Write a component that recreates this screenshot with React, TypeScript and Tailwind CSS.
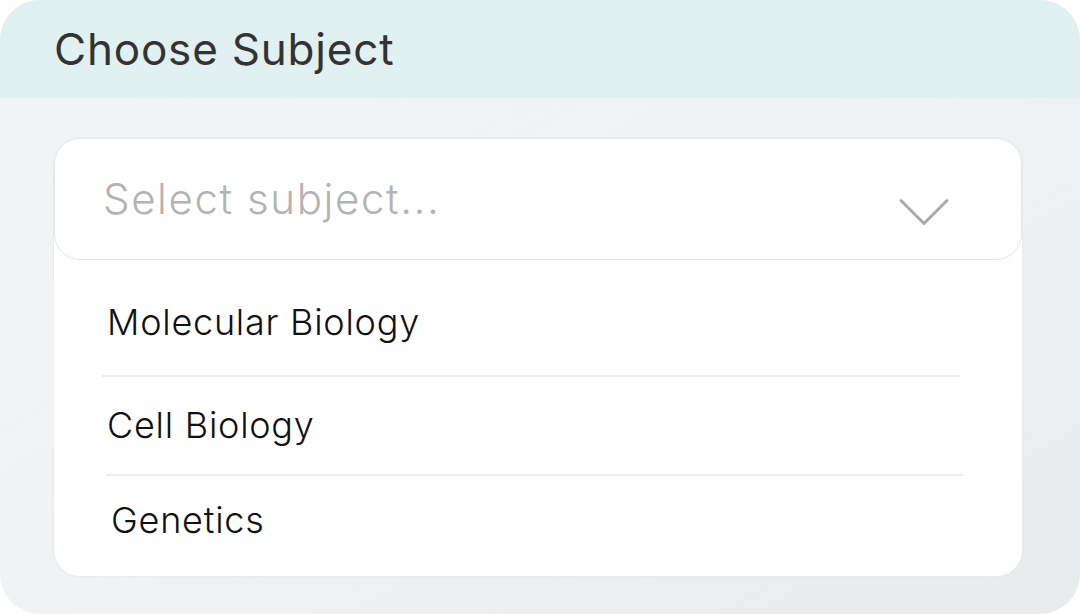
import * as React from "react";

const subjects = [
  { label: "Molecular Biology", className: "pt-[40px] pb-[31px] pl-[53px]" },
  { label: "Cell Biology", className: "pt-[26px] pb-[27px] pl-[53px]" },
  { label: "Genetics", className: "pt-[22px] pb-[34px] pl-[57px]" },
];

function Chevron() {
  return (
    <svg width="52" height="29" viewBox="0 0 52 29" fill="none" className="mt-[26px] shrink-0">
      <polyline
        points="3,2.5 26,25.5 49,2.5"
        stroke="#a9a9a9"
        strokeWidth="3"
        strokeLinecap="round"
        strokeLinejoin="round"
      />
    </svg>
  );
}

export default function App() {
  const [open] = React.useState(true);

  return (
    <div
      className="h-[614px] w-[1080px] bg-white"
      style={{ fontFamily: "Inter, 'Noto Sans', sans-serif" }}
    >
      <div className="flex h-full flex-col overflow-hidden rounded-[40px] bg-gradient-to-br from-[#f1f5f6] via-[#eff3f4] to-[#e7ebec]">
        <div className="flex h-[98px] shrink-0 items-center bg-[#e1f0f1] px-[54px]">
          <h1 className="text-[44px] leading-none font-normal tracking-[0.8px] text-[#333333]">
            Choose Subject
          </h1>
        </div>

        <div className="flex-1 pt-[40px] pr-[58px] pb-[40px] pl-[54px]">
          <div className="flex h-full flex-col rounded-[26px] bg-white shadow-[0_1px_3px_rgba(0,0,0,0.04)] ring-1 ring-[#e8ecec]">
            <button className="flex h-[122px] shrink-0 items-center justify-between rounded-[26px] border border-[#e3e7e8] bg-white pr-[71px] pl-[48px] text-left">
              <span className="text-[42px] leading-none font-light tracking-[1.6px] text-[#b3b3b3]">
                Select subject...
              </span>
              <Chevron />
            </button>

            {open && (
              <ul className="flex flex-col">
                {subjects.map((s, i) => (
                  <li key={s.label}>
                    <div className={s.className}>
                      <span className="block text-[36px] leading-[44px] font-light tracking-[0.75px] text-[#111111]">
                        {s.label}
                      </span>
                    </div>
                    {i === 0 && <div className="mr-[63px] ml-[48px] h-[2px] bg-[#e9eeee]" />}
                    {i === 1 && <div className="mr-[59px] ml-[52px] h-[2px] bg-[#e9eeee]" />}
                  </li>
                ))}
              </ul>
            )}
          </div>
        </div>
      </div>
    </div>
  );
}
